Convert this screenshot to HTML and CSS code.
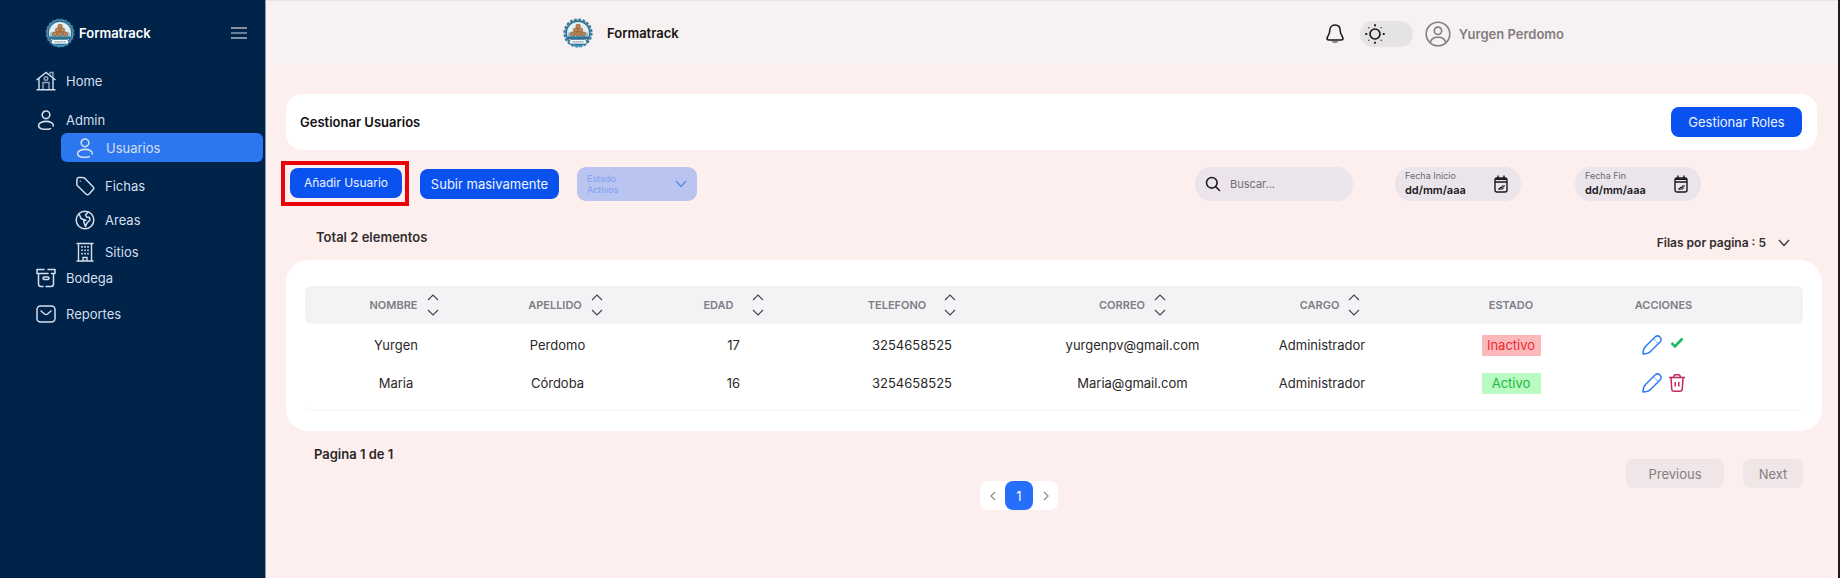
FILE: index.html
```html
<!DOCTYPE html>
<html lang="es">
<head>
<meta charset="utf-8">
<meta name="viewport" content="width=device-width, initial-scale=1">
<title>Formatrack - Gestionar Usuarios</title>
<link rel="stylesheet" href="styles.css">
</head>
<body>
<svg class="defs" width="0" height="0" aria-hidden="true">
  <defs>
    <symbol id="logo" viewBox="0 0 30 30">
      <circle cx="15" cy="15" r="13.400" fill="#7fb9d0"/>
      <circle cx="15" cy="15" r="13.600" fill="none" stroke="#3a7594" stroke-width="2" stroke-dasharray="2.600 1.670"/>
      <circle cx="15" cy="15" r="11.800" fill="none" stroke="#2b6282" stroke-width="1.200"/>
      <circle cx="15" cy="15" r="10.800" fill="#e3eff2"/>
      <path d="M5 14.500h20v6H5z" fill="#8fc3d6"/>
      <path d="M5 18.500h20v2.500H5z" fill="#2f7394"/>
      <g fill="#c98550" stroke="#6b4527" stroke-width=".5">
        <rect x="13" y="6.500" width="4.200" height="3.800" rx="1"/>
        <rect x="10.600" y="10.200" width="4.200" height="3.800" rx="1"/><rect x="15.300" y="10.200" width="4.200" height="3.800" rx="1"/>
        <rect x="7.600" y="14" width="4.400" height="3.800" rx="1"/><rect x="12.800" y="14" width="4.400" height="3.800" rx="1"/><rect x="18" y="14" width="4.400" height="3.800" rx="1"/>
      </g>
      <path d="M7 25.500q8 5 16 0" fill="none" stroke="#3e9cc4" stroke-width="2"/>
      <rect x="6.500" y="21.500" width="17" height="4.600" rx="1.500" fill="#f8fbfc" stroke="#2b6282" stroke-width=".7"/>
      <path d="M9.500 23.900h11" stroke="#6b8796" stroke-width="1.100" stroke-dasharray="1.300 .6"/>
    </symbol>
    <symbol id="person" viewBox="0 0 20 22"><g fill="none" stroke="currentColor" stroke-width="1.700" stroke-linecap="round"><circle cx="10" cy="5.300" r="4.200"/><path d="M18 17.500c.5-3-3.700-5-7.800-5s-8.400 1.800-8.400 4.500 3.500 4.300 8.200 4.300c2 0 3.500-.2 4.800-.8"/></g></symbol>
    <symbol id="sort" viewBox="0 0 12 22"><path d="M1 6l5-5 5 5M1 16l5 5 5-5" fill="none" stroke="currentColor" stroke-width="1.100"/></symbol>
    <symbol id="chevron" viewBox="0 0 12 8"><path d="M1 1l5 5.500L11 1" fill="none" stroke="currentColor" stroke-width="1.200"/></symbol>
    <symbol id="calendar" viewBox="0 0 14 18"><g fill="none" stroke="currentColor" stroke-width="1.400"><rect x="1" y="3" width="12" height="14" rx="2"/><path d="M1 7h12M4 .5v4M10 .5v4M1.500 4.200h11"/><path d="M4 14h2v-1.500h2V11h3M5 14h4v-2.500" stroke-width="1"/></g></symbol>
    <symbol id="pencil" viewBox="0 0 20 20"><path d="M1 19c0-3 .5-5.500 2.500-7.500L13 2c3.500-3 8 1.500 5 5L8.500 16.500C6.500 18.500 4 19 1 19z" fill="none" stroke="currentColor" stroke-width="1.500" stroke-linejoin="round"/><path d="M12 3.500c1 2.500 2.500 4 4.800 4.700" fill="none" stroke="currentColor" opacity=".6"/></symbol>
  </defs>
</svg>

<div class="app">
  <aside class="sidebar">
    <div class="sidebar-head">
      <svg class="logo"><use href="#logo"/></svg>
      <span class="brand">Formatrack</span>
      <button class="icon-button menu-button" type="button" aria-label="Menú">
        <svg width="16" height="12" viewBox="0 0 16 12"><path d="M0 1h16M0 11h16" stroke="currentColor" stroke-width="1.200"/><path d="M0 6h16" stroke="currentColor" stroke-width="1.200" opacity=".7"/></svg>
      </button>
    </div>
    <nav class="nav">
      <a class="nav-item nav-home" href="#"><svg class="nav-icon" viewBox="0 0 20 20"><g fill="none" stroke="currentColor" stroke-width="1.400"><path d="M.5 9L10 1.500 19.500 9M3 7.500V18M17 7.500V18M.5 18.700h19"/><path d="M7 18v-6.500h6V18M14 3.500V1.500h3v5" opacity=".7"/><circle cx="10" cy="7.500" r="1.800" opacity=".7"/></g></svg>Home</a>
      <a class="nav-item nav-admin" href="#"><svg class="nav-icon"><use href="#person"/></svg>Admin</a>
      <a class="nav-item nav-sub nav-active" href="#"><svg class="nav-icon"><use href="#person"/></svg>Usuarios</a>
      <a class="nav-item nav-sub nav-fichas" href="#"><svg class="nav-icon" viewBox="0 0 20 20"><g fill="none" stroke="currentColor" stroke-width="1.500" stroke-linejoin="round"><path d="M2 3.200Q2 1.500 3.700 1.400L8 1.500q1 0 1.800.8l8.400 8.700q1.200 1.300 0 2.600l-4.400 4.600q-1.300 1.200-2.600 0L2.500 9.800Q1.800 9 1.800 8z"/><path d="M5 5l.6.600"/></g></svg>Fichas</a>
      <a class="nav-item nav-sub nav-areas" href="#"><svg class="nav-icon" viewBox="0 0 20 20"><g fill="none" stroke="currentColor" stroke-width="1.500" stroke-linejoin="round"><circle cx="10" cy="10" r="8.800"/><path d="M4 3.800l2 4.700 2.500 1 .5 3 1.500 4 1.500-3.500 3-3-.5-2.500-3-.5-1-2 3-3.500M8.500 9.500l3 1"/></g></svg>Areas</a>
      <a class="nav-item nav-sub nav-sitios" href="#"><svg class="nav-icon" viewBox="0 0 20 20"><g fill="none" stroke="currentColor" stroke-width="1.400"><path d="M3.500 19V1.500h13V19M1.500 1.500h17M1.500 19h17M8 19v-3.500h4V19"/><path d="M7 4v10M10 4v10M13 4v10" stroke-width="1.600" stroke-dasharray="1.700 1.700"/></g></svg>Sitios</a>
      <a class="nav-item nav-bodega" href="#"><svg class="nav-icon" viewBox="0 0 20 20"><g fill="none" stroke="currentColor" stroke-width="1.500" stroke-linecap="round" stroke-linejoin="round"><path d="M8 1.500H1v4h11M12 1.500h7v4h-3.500M2.500 6v10q0 2.500 2.500 2.500h2M17.500 6v10q0 2.500-2.500 2.500h-5"/><rect x="7" y="9" width="6" height="2.500" rx="1.200"/></g></svg>Bodega</a>
      <a class="nav-item nav-reportes" href="#"><svg class="nav-icon" viewBox="0 0 20 20"><g fill="none" stroke="currentColor" stroke-width="1.500" stroke-linecap="round" stroke-linejoin="round"><rect x="1" y="2" width="18" height="16" rx="3.500"/><path d="M5 7l3.500 3q1.500 1.200 3 0L15 7"/></g></svg>Reportes</a>
    </nav>
  </aside>

  <div class="page">
    <header class="topbar">
      <svg class="logo"><use href="#logo"/></svg>
      <span class="brand">Formatrack</span>
      <div class="topbar-tools">
        <button class="icon-button bell" type="button" aria-label="Notificaciones">
          <svg width="18" height="20" viewBox="0 0 18 20"><path d="M9 1C5.500 1 3.800 3.500 3.800 6.500c0 4-2.800 6-2.800 8 0 1.200.8 1.500 2 1.500h12c1.200 0 2-.3 2-1.500 0-2-2.800-4-2.800-8C14.200 3.500 12.500 1 9 1z" fill="none" stroke="currentColor" stroke-width="1.500"/><path d="M5.500 17h7q-1 2.300-3.500 2.300T5.500 17z" fill="#8b8788"/></svg>
        </button>
        <button class="theme-toggle" type="button" aria-label="Cambiar tema">
          <svg width="20" height="20" viewBox="0 0 20 20"><g fill="none" stroke="currentColor" stroke-linecap="round"><circle cx="10" cy="10" r="5" stroke-width="1.600"/><path d="M10 1v.5M10 18.500v.5M1 10h.5M18.500 10h.5" stroke-width="1.800"/><path d="M3.700 3.700l.2.200M16.100 3.900l.2-.2M3.700 16.300l.2-.2M16.100 16.100l.2.200" stroke-width="1.100"/></g></svg>
        </button>
        <button class="user" type="button">
          <svg width="26" height="26" viewBox="0 0 26 26"><g fill="none" stroke="currentColor" stroke-width="1.600"><circle cx="13" cy="13" r="11.800"/><circle cx="13" cy="9.800" r="3.700"/><path d="M5.500 21.500c.5-4 3.500-5.200 7.500-5.200s7 1.200 7.500 5.200"/></g></svg>
          Yurgen Perdomo
        </button>
      </div>
    </header>

    <main class="content">
      <section class="title-card">
        <h1 class="title">Gestionar Usuarios</h1>
        <button class="button button-roles" type="button">Gestionar Roles</button>
      </section>

      <section class="toolbar">
        <div class="highlight"><button class="button button-add" type="button">Añadir Usuario</button></div>
        <button class="button button-upload" type="button">Subir masivamente</button>
        <div class="state-filter">
          <label class="state-label" for="estado">Estado</label>
          <select class="state-select" id="estado"><option>Activos</option><option>Inactivos</option></select>
          <svg class="state-arrow" width="12" height="8"><use href="#chevron"/></svg>
        </div>
        <div class="filters">
          <label class="search">
            <svg width="16" height="16" viewBox="0 0 16 16"><g fill="none" stroke="currentColor" stroke-width="1.600" stroke-linecap="round"><circle cx="6.800" cy="6.800" r="5.300"/><path d="M10.800 10.800l3.700 3.700"/></g></svg>
            <input class="search-input" type="text" placeholder="Buscar..." aria-label="Buscar">
          </label>
          <label class="date">
            <span class="date-text"><span class="date-label">Fecha Inicio</span><input class="date-input" type="text" value="dd/mm/aaa"></span>
            <svg class="date-icon" width="14" height="18"><use href="#calendar"/></svg>
          </label>
          <label class="date">
            <span class="date-text"><span class="date-label">Fecha Fin</span><input class="date-input" type="text" value="dd/mm/aaa"></span>
            <svg class="date-icon" width="14" height="18"><use href="#calendar"/></svg>
          </label>
        </div>
      </section>

      <section class="summary">
        <p class="total">Total 2 elementos</p>
        <button class="rows-button" type="button">Filas por pagina : 5 <svg width="12" height="8"><use href="#chevron"/></svg></button>
      </section>

      <section class="table-card">
        <div class="table-frame">
          <table class="users">
            <colgroup><col class="c-nombre"><col class="c-apellido"><col class="c-edad"><col class="c-telefono"><col class="c-correo"><col class="c-cargo"><col class="c-estado"><col class="c-acciones"></colgroup>
            <thead>
              <tr>
                <th class="first"><button class="sort offset" type="button">NOMBRE<svg class="sort-icon"><use href="#sort"/></svg></button></th>
                <th><button class="sort offset" type="button">APELLIDO<svg class="sort-icon"><use href="#sort"/></svg></button></th>
                <th><button class="sort wide" type="button">EDAD<svg class="sort-icon"><use href="#sort"/></svg></button></th>
                <th><button class="sort wide" type="button">TELEFONO<svg class="sort-icon"><use href="#sort"/></svg></button></th>
                <th><button class="sort" type="button">CORREO<svg class="sort-icon"><use href="#sort"/></svg></button></th>
                <th><button class="sort offset" type="button">CARGO<svg class="sort-icon sort-small"><use href="#sort"/></svg></button></th>
                <th>ESTADO</th>
                <th class="last">ACCIONES</th>
              </tr>
            </thead>
            <tbody>
              <tr>
                <td class="first">Yurgen</td><td>Perdomo</td><td>17</td><td>3254658525</td><td>yurgenpv@gmail.com</td><td>Administrador</td>
                <td><span class="badge badge-off">Inactivo</span></td>
                <td class="last"><span class="actions">
                  <button class="icon-button edit" type="button" aria-label="Editar Yurgen"><svg width="20" height="20"><use href="#pencil"/></svg></button>
                  <button class="icon-button enable" type="button" aria-label="Activar Yurgen"><svg width="16" height="18" viewBox="0 0 16 18"><path d="M2.500 7l3.500 3.500L13.500 2.500" fill="none" stroke="currentColor" stroke-width="2.600"/></svg></button>
                </span></td>
              </tr>
              <tr>
                <td class="first">Maria</td><td>Córdoba</td><td>16</td><td>3254658525</td><td>Maria@gmail.com</td><td>Administrador</td>
                <td><span class="badge badge-on">Activo</span></td>
                <td class="last"><span class="actions">
                  <button class="icon-button edit" type="button" aria-label="Editar Maria"><svg width="20" height="20"><use href="#pencil"/></svg></button>
                  <button class="icon-button remove" type="button" aria-label="Eliminar Maria"><svg width="16" height="18" viewBox="0 0 16 18"><g fill="none" stroke="currentColor" stroke-width="1.500"><path d="M0 3.500h16M4.500 3.500Q5 .8 6.500.8h3q1.500 0 2 2.700M2 3.500l.7 11.500q.2 2.200 2.300 2.200h6q2.100 0 2.300-2.200L14 3.500M6.200 8v4.500M9.800 8v4.500"/></g></svg></button>
                </span></td>
              </tr>
            </tbody>
          </table>
        </div>
      </section>

      <footer class="footer">
        <p class="page-info">Pagina 1 de 1</p>
        <div class="pager">
          <button class="pager-arrow" type="button" aria-label="Anterior"><svg width="6" height="10" viewBox="0 0 6 10"><path d="M5 1L1 5l4 4" fill="none" stroke="currentColor" stroke-width="1.300"/></svg></button>
          <button class="pager-current" type="button">1</button>
          <button class="pager-arrow" type="button" aria-label="Siguiente"><svg width="6" height="10" viewBox="0 0 6 10"><path d="M1 1l4 4-4 4" fill="none" stroke="currentColor" stroke-width="1.300"/></svg></button>
        </div>
        <div class="steps">
          <button class="step step-previous" type="button">Previous</button>
          <button class="step step-next" type="button">Next</button>
        </div>
      </footer>
    </main>
  </div>
</div>
</body>
</html>
```
FILE: styles.css
```css
* { box-sizing: border-box; }
body { margin: 0; font-family: Inter, "Liberation Sans", sans-serif; font-size: 13px; line-height: 16px; color: #2b2728; }
button, input, select { font: inherit; color: inherit; }
button { border: 0; padding: 0; background: none; cursor: pointer; }
a { color: inherit; text-decoration: none; }
h1, p { margin: 0; }
svg { display: block; flex: none; }
.defs { position: absolute; }

.app { display: flex; min-height: 100vh; background: #feefef; border-right: 2px solid #1d1a1b; }

.sidebar { flex: none; width: 266px; background: #002349; color: #d5dfee; border-right: 1px solid #8d9bb1; }
.sidebar-head { display: flex; align-items: center; gap: 4px; height: 61px; padding: 5px 18px 0 45px; color: #fff; }
.logo { width: 30px; height: 30px; }
.brand { font-weight: 600; }
.icon-button { display: block; }
.menu-button { margin-left: auto; }
.nav { display: flex; flex-direction: column; }
.nav-item { display: flex; align-items: center; gap: 10px; height: 28px; padding-left: 36px; }
.nav-icon { width: 20px; height: 20px; }
.nav-home { height: 39px; }
.nav-admin { height: 26px; margin-top: 7px; }
.nav-sub { margin: 0 2px 0 61px; padding-left: 14px; }
.nav-active { height: 29px; gap: 11px; background: #2c76ef; border-radius: 6px; }
.nav-fichas { margin-top: 10px; }
.nav-areas { margin-top: 6px; }
.nav-sitios { margin-top: 4px; }
.nav-bodega { height: 24px; }
.nav-reportes { height: 24px; margin-top: 12px; }

.page { flex: 1; min-width: 0; }
.topbar { display: flex; align-items: center; gap: 14px; height: 65px; padding: 0 274px 0 297px; background: #f7f1f1; border-top: 1px solid #e9e3e4; color: #171415; }
.topbar-tools { display: flex; align-items: center; margin-left: auto; padding-top: 2px; }
.theme-toggle { display: flex; align-items: center; width: 53px; height: 26px; margin: 0 12px 0 16px; padding-left: 5px; border-radius: 13px; background: #e5e3e3; }
.user { display: flex; align-items: center; gap: 8px; font-weight: 600; color: #827d83; }

.content { padding: 29px 16px 0 20px; }
.title-card { display: flex; align-items: center; justify-content: space-between; height: 56px; margin-right: 5px; padding: 0 15px 0 14px; background: #fff; border-radius: 16px; }
.title { font-size: 13px; font-weight: 600; color: #121012; }
.button { height: 30px; border-radius: 8px; background: #0a52ef; color: #eef3ff; white-space: nowrap; }
.button-roles { width: 131px; }

.toolbar { display: flex; align-items: center; height: 45px; margin: 11px 0 0 -5px; }
.highlight { padding: 3px 3px 4px 5px; border: 4px solid #e80408; }
.button-add { width: 112px; font-size: 12px; }
.button-upload { width: 139px; margin-left: 11px; }
.state-filter { position: relative; width: 120px; height: 34px; margin-left: 18px; padding: 6px 10px; border-radius: 9px; background: #b9c4f0; color: #7da1f6; font-size: 9px; line-height: 11px; }
.state-label { display: block; }
.state-select { display: block; width: 100%; border: 0; padding: 0; background: none; appearance: none; }
.state-arrow { position: absolute; top: 13px; right: 10px; color: #5b83ea; }
.filters { display: flex; margin-left: auto; margin-right: 121px; }
.search { display: flex; align-items: center; gap: 9px; width: 158px; height: 34px; padding: 0 10px; border-radius: 16px; background: #ebe5eb; color: #1d1a1d; }
.search-input { width: 100%; min-width: 0; border: 0; padding: 0; background: none; outline: 0; font-size: 11px; }
.search-input::placeholder { color: #716c73; opacity: 1; }
.date { display: flex; align-items: center; justify-content: space-between; width: 126px; height: 34px; padding: 0 13px 0 10px; border-radius: 16px; background: #ebe5eb; color: #1a171a; }
.search + .date { margin-left: 42px; }
.date + .date { margin-left: 54px; }
.date-label { display: block; font-size: 9px; line-height: 12px; color: #6d686e; }
.date-input { display: block; width: 72px; height: 16px; border: 0; padding: 0; background: none; font-size: 11px; font-weight: 600; }

.summary { display: flex; align-items: center; justify-content: space-between; height: 54px; padding: 8px 32px 0 30px; font-weight: 600; color: #322d2e; }
.rows-button { display: flex; align-items: center; gap: 12px; padding-top: 11px; font-size: 12px; font-weight: 600; }

.table-card { padding: 26px 19px 20px; border-radius: 22px; background: #fff; }
.table-frame { padding-bottom: 10px; border-bottom: 1px solid #f5f5f7; border-radius: 6px; }
.users { width: 100%; table-layout: fixed; border-collapse: separate; border-spacing: 0; text-align: center; }
.c-nombre { width: 131px; }
.c-apellido { width: 243px; }
.c-edad { width: 109px; }
.c-telefono { width: 248px; }
.c-correo { width: 193px; }
.c-cargo { width: 186px; }
.c-estado { width: 192px; }
.c-acciones { width: 196px; }
.users th { height: 38px; padding: 0; background: #f3f3f5; font-size: 11px; font-weight: 600; color: #7f7c84; }
.users td { height: 38px; padding: 4px 0 0; }
.users .first { padding-left: 51px; border-radius: 6px 0 0 6px; }
.users .last { padding-right: 83px; border-radius: 0 6px 6px 0; }
.sort { display: flex; align-items: center; justify-content: center; gap: 9px; width: 100%; }
.sort.wide { gap: 18px; }
.sort.offset { padding-left: 16px; }
.sort-icon { width: 12px; height: 22px; color: #454247; }
.badge { display: inline-block; width: 59px; padding: 2px 0 3px; vertical-align: middle; }
.badge-off { background: #fcb9bb; color: #ef2930; }
.badge-on { background: #b9fbc3; color: #22b83b; }
.actions { display: flex; justify-content: center; align-items: center; gap: 7px; }
.edit { color: #2f7df0; }
.enable { color: #1fb866; }
.remove { color: #c62a58; }

.footer { display: grid; grid-template-columns: 694fr auto 764fr; align-items: start; }
.page-info { padding: 15px 0 0 28px; font-weight: 600; }
.pager { display: flex; margin-top: 50px; border-radius: 8px; background: #fff; }
.pager-arrow { display: flex; align-items: center; justify-content: center; width: 25px; height: 29px; color: #928d93; }
.pager-current { width: 28px; height: 29px; border-radius: 8px; background: #266ffa; color: #fff; }
.steps { display: flex; justify-content: flex-end; gap: 19px; padding: 28px 19px 0 0; }
.step { height: 29px; border-radius: 8px; background: #f0e5e7; color: #857f83; }
.step-previous { width: 98px; }
.step-next { width: 60px; }
```
